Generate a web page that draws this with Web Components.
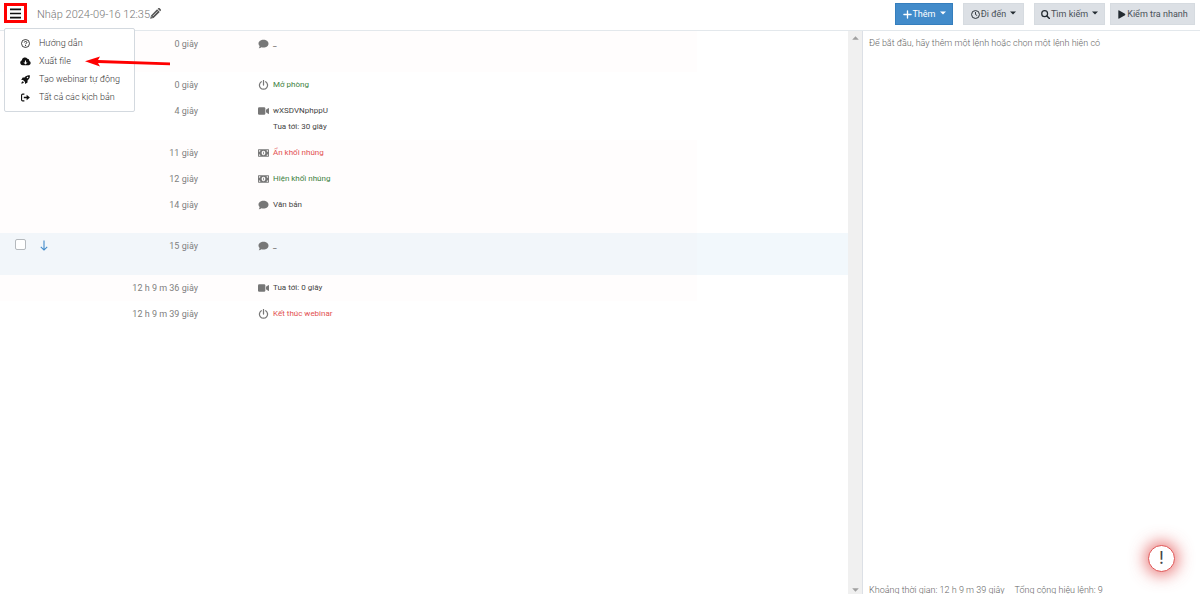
<!DOCTYPE html>
<html lang="vi">
<head>
<meta charset="utf-8">
<title>Kịch bản webinar</title>
<style>
html, body { margin: 0; height: 100%; }
body { font-family: Roboto, "Open Sans", sans-serif; font-weight: 300; font-size: 9px; color: #444; background: #fff; overflow: hidden; }
</style>
</head>
<body>
<script-editor></script-editor>
<script>
const ICONS = {
  menu: ['0 0 12 12', '<path d="M0 1.500h12M0 6h12M0 10.500h12" stroke="currentColor" stroke-width="1.800"/>'],
  pencil: ['0 0 16 16', '<path d="m11.200 1 .7-.6c.7-.6 1.600-.5 2.200.1l1.400 1.400c.6.6.6 1.500.1 2.200l-.8.800zM10.300 1.800l3.900 3.900L5.200 14.500.2 15.800 1.500 10.800z"/><path d="M4 11.800 11 4.800" stroke="#fff" stroke-width="1" fill="none"/><path d="M1.900 12.500 3.500 14" stroke="#fff" stroke-width=".8"/>'],
  help: ['0 0 16 16', '<circle cx="8" cy="8" r="7.100" fill="none" stroke="currentColor" stroke-width="1.400"/><path d="M5.800 6.300c.1-2.700 4.600-2.600 4.500 0 0 1.500-2.200 1.500-2.200 3.100" fill="none" stroke="currentColor" stroke-width="1.500"/><circle cx="8.100" cy="11.700" r="1"/>'],
  cloud: ['0 0 20 16', '<path fill-rule="evenodd" d="M5 15a4.800 4.800 0 0 1-1.700-9.200A5.600 5.600 0 0 1 13.500 3a3.600 3.600 0 0 1 3.400 4A4.200 4.200 0 0 1 16 15zM9 6v4H6.300L10 13.500 13.700 10H11V6z"/>'],
  rocket: ['0 0 16 16', '<path fill-rule="evenodd" d="M15.600.5C11.500-.2 8.500 1.500 6.300 4.500H3L.4 9h3.200l3.500 3.500V16l4.500-2.800V9.700c3-2.200 4.700-5.200 4-9.200zM11.600 3a1.400 1.400 0 1 1 0 2.800 1.400 1.400 0 0 1 0-2.800zM3 11c-2 .7-2 2.500-2.300 4.400 1.900-.3 3.700-.4 4.400-2.400z"/>'],
  exit: ['0 0 16 16', '<path d="M6 2H3Q1 2 1 4v8q0 2 2 2h3" fill="none" stroke="currentColor" stroke-width="2"/><path d="M5 6.500h5V3l5.800 5L10 13V9.500H5z"/>'],
  comment: ['0 0 16 16', '<path d="M8 1.200c4.400 0 8 2.700 8 6.200s-3.600 6.200-8 6.200c-1.200 0-2.300-.2-3.300-.6C3.500 14 2 14.800.4 14.800c.8-1 1.300-2.200 1.400-3.500C.7 10.200 0 8.900 0 7.400c0-3.500 3.600-6.200 8-6.200z"/>'],
  power: ['0 0 16 16', '<path d="M4.500 2.800a6.500 6.500 0 1 0 7 0M8 .8v7.200" fill="none" stroke="currentColor" stroke-width="2" stroke-linecap="round"/>'],
  video: ['0 0 18 14', '<rect y="1" width="12" height="12" rx="2"/><path d="m13 5 3.600-2.700c.6-.4 1.400 0 1.400.7v8c0 .7-.8 1.100-1.400.7L13 9z"/>'],
  money: ['0 0 18 14', '<path fill-rule="evenodd" d="M1 1h16q1 0 1 1v10q0 1-1 1H1q-1 0-1-1V2q0-1 1-1zM9 3.500C7.200 3.500 6 5 6 7s1.200 3.500 3 3.500S12 9 12 7 10.800 3.500 9 3.500zM1.500 2.500V5Q4 5 4 2.500zm15 0H14Q14 5 16.500 5zM1.500 9v2.500H4Q4 9 1.500 9zm15 0Q14 9 14 11.500h2.500z"/><path d="M8.300 5h1.200v4H8.300z"/>'],
  down: ['0 0 10 12', '<path d="M5 .5v10M1.500 7.500 5 11l3.500-3.500" fill="none" stroke="currentColor" stroke-width="1.200"/>'],
  plus: ['0 0 10 10', '<path d="M5 1v8M1 5h8" stroke="currentColor" stroke-width="1.500" stroke-linecap="round"/>'],
  clock: ['0 0 16 16', '<circle cx="8" cy="8" r="7" fill="none" stroke="currentColor" stroke-width="1.700"/><path d="M8 3.500V8l3 2" fill="none" stroke="currentColor" stroke-width="1.600"/>'],
  search: ['0 0 16 16', '<circle cx="6.500" cy="6.500" r="5.200" fill="none" stroke="currentColor" stroke-width="2.200"/><path d="m10.500 10.500 4.500 4.500" stroke="currentColor" stroke-width="2.600" stroke-linecap="round"/>'],
  play: ['0 0 12 14', '<path d="M1 1.500Q1 0 2.400.8l9 5.200q1.200 1 0 2l-9 5.200Q1 14 1 12.500z"/>'],
  caret: ['0 0 10 6', '<path d="M0 .5h10L5 5.500z"/>'],
  up: ['0 0 10 6', '<path d="M0 5.500h10L5 .5z"/>']
};

class AppIcon extends HTMLElement {
  constructor() { super(); this.attachShadow({ mode: 'open' }); }
  connectedCallback() {
    const [box, art] = ICONS[this.getAttribute('name')];
    this.shadowRoot.innerHTML = `<style>
      :host { display: inline-flex; flex: none; width: var(--w, 10px); height: var(--h, 10px); }
      svg { width: 100%; height: 100%; fill: currentColor; }
    </style><svg viewBox="${box}" aria-hidden="true">${art}</svg>`;
  }
}
customElements.define('app-icon', AppIcon);

class ToolButton extends HTMLElement {
  constructor() { super(); this.attachShadow({ mode: 'open' }); }
  connectedCallback() {
    const caret = this.hasAttribute('menu') ? '<app-icon class="caret" name="caret"></app-icon>' : '';
    this.shadowRoot.innerHTML = `<style>
      :host { display: block; }
      button { box-sizing: border-box; width: 100%; height: 22px; display: flex; align-items: center; justify-content: center; gap: 1px;
        border: 1px solid #d6dbe0; background: #dce0e5; color: #222a30; font: inherit; font-weight: 400; padding: 0; white-space: nowrap; }
      app-icon { --w: 9px; --h: 9px; }
      .caret { --w: 6px; --h: 4px; margin: 0 0 2px 3px; }
      :host([primary]) button { background: #428bca; border-color: #357ebd; color: #fff; }
      span { color: #4a5157; }
      :host([primary]) span { color: #fff; }
    </style><button type="button"><app-icon name="${this.getAttribute('icon')}"></app-icon><span><slot></slot></span>${caret}</button>`;
  }
}
customElements.define('tool-button', ToolButton);

class AppMenu extends HTMLElement {
  constructor() {
    super();
    this.attachShadow({ mode: 'open' }).innerHTML = `<style>
      :host { display: block; box-sizing: border-box; width: 131px; padding: 5px 0; background: #fff; border: 1px solid #d3d9df; border-radius: 2px; }
      a { display: flex; align-items: center; gap: 8px; height: 18px; padding-left: 15px; color: #333; text-decoration: none; white-space: nowrap; }
      app-icon { --w: 11px; --h: 9px; color: #111; }
    </style>
    <nav>
      <a href="#help"><app-icon name="help"></app-icon>Hướng dẫn</a>
      <a href="#export"><app-icon name="cloud"></app-icon>Xuất file</a>
      <a href="#auto"><app-icon name="rocket"></app-icon>Tạo webinar tự động</a>
      <a href="#all"><app-icon name="exit"></app-icon>Tất cả các kịch bản</a>
    </nav>`;
  }
}
customElements.define('app-menu', AppMenu);

class TopBar extends HTMLElement {
  constructor() {
    super();
    this.attachShadow({ mode: 'open' }).innerHTML = `<style>
      :host { display: flex; box-sizing: border-box; height: 31px; padding: 3px 5px 0 4px; border-bottom: 1px solid #e3e8ec; align-items: flex-start; position: relative; z-index: 2; }
      .burger { box-sizing: border-box; width: 23px; height: 20px; border: 3px solid #f00; background: #fff; padding: 0; color: #111; display: grid; place-items: center; }
      .burger app-icon { --w: 11px; --h: 11px; }
      h1 { margin: 0 0 0 10px; font-size: 11px; font-weight: 300; line-height: 23px; color: #777; white-space: nowrap; }
      .edit { border: 0; background: none; padding: 0; margin: 5px 0 0; color: #555; display: flex; }
      .edit app-icon { --w: 11px; --h: 11px; }
      .tools { margin-left: auto; display: flex; gap: 10px; }
      .w1 { width: 58px; } .w2 { width: 61px; } .w3 { width: 71px; } .w4 { width: 85px; margin-left: -5px; }
      app-menu { position: absolute; left: 4px; top: 28px; }
      .arrow { position: absolute; left: 85px; top: 56px; width: 86px; height: 11px; }
    </style>
    <button class="burger" type="button" aria-label="Menu"><app-icon name="menu"></app-icon></button>
    <h1>Nhập 2024-09-16 12:35</h1>
    <button class="edit" type="button" aria-label="Sửa tên"><app-icon name="pencil"></app-icon></button>
    <div class="tools">
      <tool-button class="w1" icon="plus" primary menu>Thêm</tool-button>
      <tool-button class="w2" icon="clock" menu>Đi đến</tool-button>
      <tool-button class="w3" icon="search" menu>Tìm kiếm</tool-button>
      <tool-button class="w4" icon="play">Kiểm tra nhanh</tool-button>
    </div>
    <app-menu></app-menu>
    <svg class="arrow" viewBox="0 0 86 11" aria-hidden="true"><path d="M0 5.300 15 .5l-2 3.500 72 2.500v2.800L13 7l2 3.500z" fill="#f00"/></svg>`;
  }
}
customElements.define('top-bar', TopBar);

const COMMANDS = [
  { time: '0 giây', icon: 'comment', text: '_', row: 'tall pink' },
  { time: '0 giây', icon: 'power', text: 'Mở phòng', tone: 'green' },
  { time: '4 giây', icon: 'video', text: 'wXSDVNphppU<br>Tua tới: 30 giây', row: 'double' },
  { time: '11 giây', icon: 'money', text: 'Ẩn khối nhúng', tone: 'red', row: 'pink' },
  { time: '12 giây', icon: 'money', text: 'Hiện khối nhúng', tone: 'green', row: 'pink' },
  { time: '14 giây', icon: 'comment', text: 'Văn bản', row: 'tall pink' },
  { time: '15 giây', icon: 'comment', text: '_', row: 'double active' },
  { time: '12 h 9 m 36 giây', icon: 'video', text: 'Tua tới: 0 giây', row: 'pink' },
  { time: '12 h 9 m 39 giây', icon: 'power', text: 'Kết thúc webinar', tone: 'red' }
];

class CommandList extends HTMLElement {
  constructor() {
    super();
    const rows = COMMANDS.map(c => {
      const on = (c.row || '').includes('active');
      return `<tr class="${c.row || ''}">
        <td class="check">${on ? '<input type="checkbox" aria-label="Chọn lệnh 15 giây">' : ''}</td>
        <td class="move">${on ? '<app-icon name="down"></app-icon>' : ''}</td>
        <td class="time">${c.time}</td>
        <td class="kind"><app-icon name="${c.icon}"></app-icon></td>
        <td class="text ${c.tone || ''}">${c.text}</td><td class="rest"></td></tr>`;
    }).join('');
    this.attachShadow({ mode: 'open' }).innerHTML = `<style>
      :host { display: block; overflow: hidden; }
      table { width: 100%; table-layout: fixed; border-collapse: collapse; }
      tr { height: 26px; } tr.tall { height: 41px; } tr.double { height: 42px; }
      td { padding: 5px 0 0; line-height: 16px; vertical-align: top; }
      .pink td:not(.rest) { background: #fffdfd; }
      .active td { background: #f2f6fa; } .active .rest { background: #f2f8fc; }
      .c1 { width: 38px; } .c2 { width: 18px; } .c3 { width: 142px; } .c4 { width: 75px; } .c6 { width: 17.8%; }
      .check { padding: 6px 0 0 15px; }
      input { appearance: none; display: block; box-sizing: border-box; width: 11px; height: 11px; margin: 0; border: 1px solid #b5b9bd; border-radius: 2px; background: #fff; }
      .move { color: #428bca; }
      .move app-icon { --w: 12px; --h: 11px; padding-top: 2px; }
      .time { text-align: right; color: #808080; font-weight: 400; }
      .kind { text-align: right; color: #777; }
      .kind app-icon { --w: 11px; --h: 10px; margin: 3px 4px 0 0; vertical-align: top; }
      .text { font-size: 8px; color: #444; font-weight: 400; }
      .green { color: #3c803e; } .red { color: #e25050; }
    </style>
    <table aria-label="Danh sách lệnh"><colgroup><col class="c1"><col class="c2"><col class="c3"><col class="c4"><col><col class="c6"></colgroup><tbody>${rows}</tbody></table>`;
  }
}
customElements.define('command-list', CommandList);

class ScrollTrack extends HTMLElement {
  constructor() {
    super();
    this.attachShadow({ mode: 'open' }).innerHTML = `<style>
      :host { display: flex; flex-direction: column; justify-content: space-between; align-items: center; background: #f0f0f0; color: #a0a0a0; padding: 5px 0 2px; }
      app-icon { --w: 7px; --h: 4px; }
    </style><app-icon name="up"></app-icon><app-icon name="caret"></app-icon>`;
  }
}
customElements.define('scroll-track', ScrollTrack);

class DetailPanel extends HTMLElement {
  constructor() {
    super();
    this.attachShadow({ mode: 'open' }).innerHTML = `<style>
      :host { display: flex; flex-direction: column; justify-content: space-between; border-left: 1px solid #dce0e6; padding: 2px 6px 0; color: #666; overflow: hidden; }
      p { margin: 0; line-height: 20px; }
      footer { display: flex; gap: 10px; height: 14px; line-height: 20px; white-space: nowrap; overflow: hidden; }
    </style>
    <p>Để bắt đầu, hãy thêm một lệnh hoặc chọn một lệnh hiện có</p>
    <footer><span>Khoảng thời gian: 12 h 9 m 39 giây</span><span>Tổng cộng hiệu lệnh: 9</span></footer>`;
  }
}
customElements.define('detail-panel', DetailPanel);

class AlertButton extends HTMLElement {
  constructor() {
    super();
    this.attachShadow({ mode: 'open' }).innerHTML = `<style>
      :host { display: block; position: absolute; right: 25px; bottom: 22px; }
      button { box-sizing: border-box; width: 27px; height: 27px; border: 1px solid #e05555; border-radius: 50%; background: #fff; padding: 0; display: grid; place-items: center; color: #444; font: 400 17px/17px Inter, sans-serif; box-shadow: 0 0 16px 3px rgba(222, 60, 60, .7); }
    </style><button type="button" aria-label="Thông báo">!</button>`;
  }
}
customElements.define('alert-button', AlertButton);

class ScriptEditor extends HTMLElement {
  constructor() {
    super();
    this.attachShadow({ mode: 'open' }).innerHTML = `<style>
      :host { display: flex; flex-direction: column; height: 100vh; position: relative; overflow: hidden; }
      main { flex: 1; min-height: 0; display: grid; grid-template-columns: minmax(0, 848fr) 14px minmax(0, 338fr); }
    </style>
    <top-bar></top-bar>
    <main><command-list></command-list><scroll-track></scroll-track><detail-panel></detail-panel></main>
    <alert-button></alert-button>`;
  }
}
customElements.define('script-editor', ScriptEditor);
</script>
</body>
</html>
